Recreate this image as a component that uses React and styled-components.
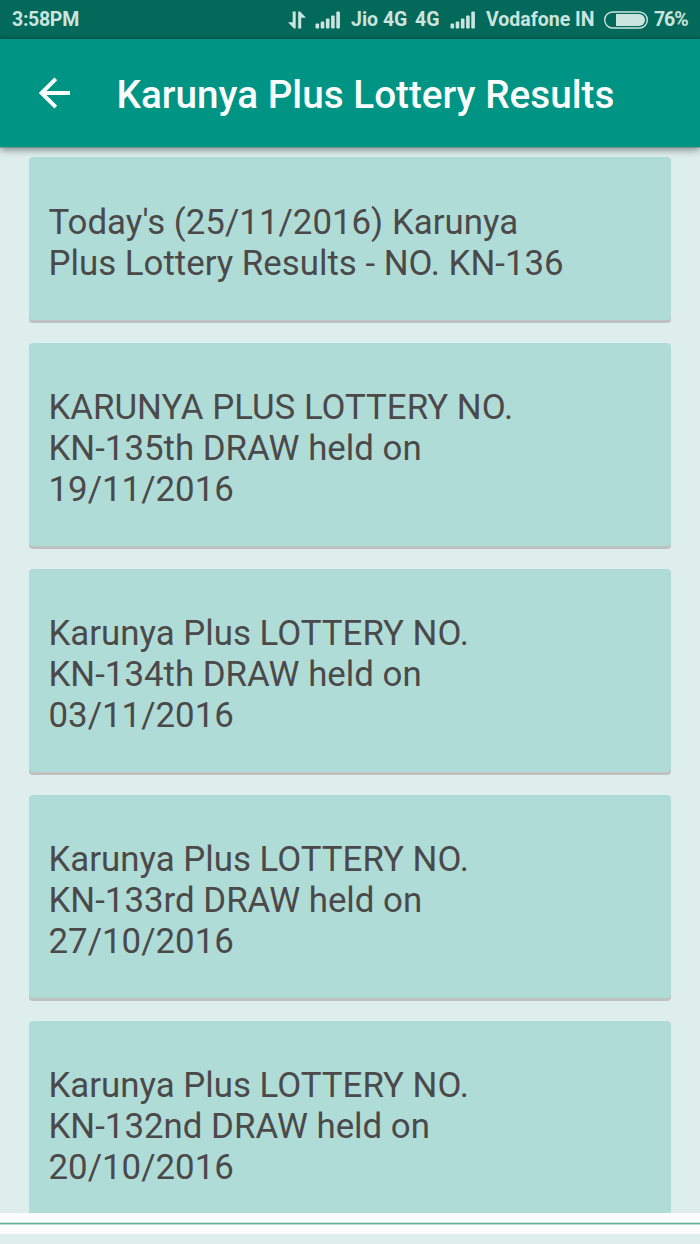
import React from 'react';
import styled, { createGlobalStyle } from 'styled-components';

const GlobalStyle = createGlobalStyle`
  * { box-sizing: border-box; }
  body { margin: 0; background: #deeeec; font-family: Roboto, sans-serif; }
`;

const Screen = styled.div`
  display: flex;
  flex-direction: column;
  width: 700px;
  height: 1244px;
  overflow: hidden;
  background: #deeeec;
`;

const StatusBar = styled.header`
  flex: none;
  display: flex;
  align-items: center;
  justify-content: space-between;
  height: 39px;
  padding: 1px 12px 0 12px;
  background: linear-gradient(#03695b 0 36px, #035a4e 39px);
  color: #cce4de;
  font-size: 19.5px;
  font-weight: 700;
  line-height: 38px;
  white-space: nowrap;
`;

const Clock = styled.span`
  display: block;
  letter-spacing: -0.3px;
`;

const StatusGroup = styled.div`
  display: flex;
  align-items: center;
`;

const StatusItem = styled.span`
  width: ${(p) => p.$width}px;
  margin-left: ${(p) => p.$gap}px;
  letter-spacing: ${(p) => p.$tracking || 0}px;
`;

const StatusIcon = styled.svg`
  flex: none;
  display: block;
  margin-left: ${(p) => p.$gap || 0}px;
`;

const AppBar = styled.div`
  flex: none;
  position: relative;
  z-index: 1;
  display: flex;
  align-items: center;
  height: 108px;
  padding: 3px 38px 0;
  background: #009485;
  box-shadow: 0 1px 0 rgba(80, 130, 122, 0.5), 0 3px 7px rgba(0, 0, 0, 0.42);
`;

const BackButton = styled.button`
  display: flex;
  width: 34px;
  height: 34px;
  margin: 0 44.5px 3px 0;
  padding: 0;
  border: 0;
  background: none;
`;

const Title = styled.h1`
  margin: 0;
  color: #fafdfc;
  font-size: 38.7px;
  font-weight: 500;
  line-height: 46px;
  white-space: nowrap;
`;

const Results = styled.main`
  flex: 1;
  display: flex;
  flex-direction: column;
  gap: 23px;
  min-height: 0;
  overflow: hidden;
  padding: 10px 29px 0;
`;

const Card = styled.article`
  flex: none;
  height: ${(p) => p.$height}px;
  padding: ${(p) => p.$top}px 20px 0 19.5px;
  border-radius: 4px;
  background: #b0dcd7;
  box-shadow: 0 3px 0 #bfc1c0;
  color: #4b4949;
  font-size: 34.85px;
  line-height: 41px;
  white-space: pre-line;
`;

const Footer = styled.footer`
  flex: none;
  height: 31px;
  border-bottom: 10px solid #deeeec;
  background: #fcfcfc;
  padding-top: 9px;
`;

const Rule = styled.div`
  height: 3px;
  background: #60b596;
  border-top: 1px solid #d2e3dc;
  border-bottom: 1px solid #bfdacf;
`;

const results = [
  { text: "Today's (25/11/2016) Karunya\nPlus Lottery Results - NO. KN-136", height: 163, top: 45 },
  { text: 'KARUNYA PLUS LOTTERY NO.\nKN-135th DRAW held on\n19/11/2016', height: 203, top: 44 },
  { text: 'Karunya Plus LOTTERY NO.\nKN-134th DRAW held on\n03/11/2016', height: 203, top: 44 },
  { text: 'Karunya Plus LOTTERY NO.\nKN-133rd DRAW held on\n27/10/2016', height: 203, top: 44 },
  { text: 'Karunya Plus LOTTERY NO.\nKN-132nd DRAW held on\n20/10/2016', height: 203, top: 44 },
];

const Signal = ({ gap }) => (
  <StatusIcon $gap={gap} width="26" height="18" viewBox="0 0 26 18" fill="#cce4de">
    <rect x="0.5" y="12.5" width="3.6" height="5" rx="1" />
    <rect x="5.7" y="10.5" width="3.6" height="7" rx="1" />
    <rect x="10.9" y="7.5" width="3.6" height="10" rx="1" />
    <rect x="16.1" y="4.5" width="3.6" height="13" rx="1" />
    <rect x="21.3" y="0.5" width="3.6" height="17" rx="1" />
  </StatusIcon>
);

export default function App() {
  return (
    <Screen>
      <GlobalStyle />
      <StatusBar>
        <Clock>3:58PM</Clock>
        <StatusGroup>
          <StatusIcon width="18" height="18" viewBox="0 0 18 18" fill="#cce4de">
            <path d="M4.7 0.5H7.7V17.5H6L0 11.2H4.7Z" />
            <path d="M10.2 17.5H13.2V6.7H18L12 0.5H10.2Z" />
          </StatusIcon>
          <Signal gap={9} />
          <StatusItem $gap={10} $width={56}>Jio 4G</StatusItem>
          <StatusItem $gap={8} $width={24}>4G</StatusItem>
          <Signal gap={11} />
          <StatusItem $gap={10} $width={108}>Vodafone IN</StatusItem>
          <StatusIcon $gap={10} width="44" height="18" viewBox="0 0 44 18">
            <rect x="0.7" y="1" width="42.6" height="16" rx="8" fill="none" stroke="#cce4de" strokeWidth="1.4" />
            <path d="M12 3H35A6 6 0 0 1 35 15H12Z" fill="#cce4de" />
          </StatusIcon>
          <StatusItem $gap={6} $width={34} $tracking={-1.1}>76%</StatusItem>
        </StatusGroup>
      </StatusBar>
      <AppBar>
        <BackButton aria-label="Back">
          <svg width="34" height="34" viewBox="0 0 34 34" fill="none" stroke="#fafdfc" strokeWidth="4">
            <path d="M32 17H4M17.8 2.8L3.6 17L17.8 31.2" />
          </svg>
        </BackButton>
        <Title>Karunya Plus Lottery Results</Title>
      </AppBar>
      <Results>
        {results.map((r) => (
          <Card key={r.text} $height={r.height} $top={r.top}>{r.text}</Card>
        ))}
      </Results>
      <Footer><Rule /></Footer>
    </Screen>
  );
}
